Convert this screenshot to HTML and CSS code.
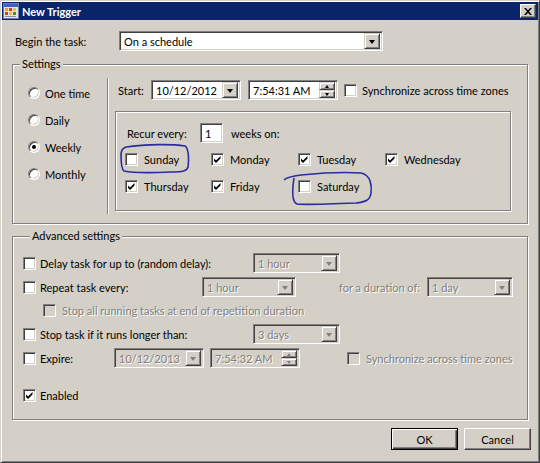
FILE: index.html
```html
<!DOCTYPE html>
<html>
<head>
<meta charset="utf-8">
<link rel="stylesheet" href="styles.css">
</head>
<body>
<div class="window">
  <div class="titlebar">
    <svg class="appicon" width="16" height="16" viewBox="0 0 16 16">
      <rect x="0.5" y="0.5" width="15" height="15" fill="#e8e4dc" stroke="#6b7fa8"/>
      <rect x="1" y="1" width="14" height="3" fill="#3a62b8"/>
      <rect x="2" y="5" width="3" height="3" fill="#e8a020"/>
      <rect x="6" y="5" width="3" height="3" fill="#d83a20"/>
      <rect x="10" y="5" width="3" height="3" fill="#f0c030"/>
      <rect x="2" y="9" width="3" height="3" fill="#d83a20"/>
      <rect x="6" y="9" width="3" height="3" fill="#f0c030"/>
      <rect x="10" y="9" width="3" height="3" fill="#4a8a30"/>
      <rect x="2" y="13" width="11" height="1" fill="#8890a8"/>
    </svg>
    <span class="title">New Trigger</span>
    <span class="close"><svg width="8" height="7" viewBox="0 0 8 7"><path d="M0 0h2l2 2.2 2-2.2h2l-3 3.5 3 3.5h-2l-2-2.2-2 2.2h-2l3-3.5z" fill="#000"/></svg></span>
  </div>

  <div class="client">
    <div class="begin-row">
      <span class="begin-label">Begin the task:</span>
      <div class="field combo w264"><span class="ftext">On a schedule</span><span class="dd"><i class="tri"></i></span></div>
    </div>

    <fieldset class="group settings">
      <legend>Settings</legend>
      <div class="settings-body">
        <div class="radios">
          <div class="radio-row"><span class="radio"></span><span>One time</span></div>
          <div class="radio-row"><span class="radio"></span><span>Daily</span></div>
          <div class="radio-row"><span class="radio on"></span><span>Weekly</span></div>
          <div class="radio-row"><span class="radio"></span><span>Monthly</span></div>
        </div>
        <div class="vsep"></div>
        <div class="sched">
          <div class="start-row">
            <span class="start-label">Start:</span>
            <div class="field combo w90"><span class="ftext">10/12/2012</span><span class="dd"><i class="tri"></i></span></div>
            <div class="field spinbox w90 ml7"><span class="ftext">7:54:31 AM</span><span class="spin"><span class="sb"><i class="up"></i></span><span class="sb"><i class="down"></i></span></span></div>
            <span class="cb ml6"></span><span class="ml5">Synchronize across time zones</span>
          </div>
          <div class="recur-box">
            <div class="recur-row">
              <span class="recur-label">Recur every:</span>
              <div class="field w23"><span class="ftext">1</span></div>
              <span class="weeks">weeks on:</span>
            </div>
            <div class="days">
              <div class="day"><span class="cb"></span><span>Sunday</span></div>
              <div class="day"><span class="cb on"><svg viewBox="0 0 11 11"><path d="M2 4.5L4 6.5L8.5 2V4.5L4 9L2 7Z"/></svg></span><span>Monday</span></div>
              <div class="day"><span class="cb on"><svg viewBox="0 0 11 11"><path d="M2 4.5L4 6.5L8.5 2V4.5L4 9L2 7Z"/></svg></span><span>Tuesday</span></div>
              <div class="day"><span class="cb on"><svg viewBox="0 0 11 11"><path d="M2 4.5L4 6.5L8.5 2V4.5L4 9L2 7Z"/></svg></span><span>Wednesday</span></div>
              <div class="day"><span class="cb on"><svg viewBox="0 0 11 11"><path d="M2 4.5L4 6.5L8.5 2V4.5L4 9L2 7Z"/></svg></span><span>Thursday</span></div>
              <div class="day"><span class="cb on"><svg viewBox="0 0 11 11"><path d="M2 4.5L4 6.5L8.5 2V4.5L4 9L2 7Z"/></svg></span><span>Friday</span></div>
              <div class="day sat"><span class="cb"></span><span>Saturday</span></div>
            </div>
          </div>
        </div>
      </div>
    </fieldset>

    <fieldset class="group advanced">
      <legend>Advanced settings</legend>
      <div class="adv-row">
        <span class="cb"></span><span class="alabel w213">Delay task for up to (random delay):</span>
        <div class="field combo dis w87"><span class="ftext">1 hour</span><span class="dd"><i class="tri"></i></span></div>
      </div>
      <div class="adv-row">
        <span class="cb"></span><span class="alabel w162">Repeat task every:</span>
        <div class="field combo dis w94"><span class="ftext">1 hour</span><span class="dd"><i class="tri"></i></span></div>
        <span class="distext dur">for a duration of:</span>
        <div class="field combo dis w86"><span class="ftext">1 day</span><span class="dd"><i class="tri"></i></span></div>
      </div>
      <div class="adv-row sub">
        <span class="cb dis"></span><span class="distext ml6">Stop all running tasks at end of repetition duration</span>
      </div>
      <div class="adv-row">
        <span class="cb"></span><span class="alabel w213">Stop task if it runs longer than:</span>
        <div class="field combo dis w87"><span class="ftext">3 days</span><span class="dd"><i class="tri"></i></span></div>
      </div>
      <div class="adv-row">
        <span class="cb"></span><span class="alabel w74">Expire:</span>
        <div class="field combo dis w90"><span class="ftext">10/12/2013</span><span class="dd"><i class="tri"></i></span></div>
        <div class="field spinbox dis w90 ml6"><span class="ftext">7:54:32 AM</span><span class="spin"><span class="sb"><i class="up"></i></span><span class="sb"><i class="down"></i></span></span></div>
        <span class="cb dis ml47"></span><span class="distext ml6">Synchronize across time zones</span>
      </div>
      <div class="adv-row enabled">
        <span class="cb on"><svg viewBox="0 0 11 11"><path d="M2 4.5L4 6.5L8.5 2V4.5L4 9L2 7Z"/></svg></span><span class="alabel">Enabled</span>
      </div>
    </fieldset>

    <div class="buttons">
      <span class="btn default">OK</span>
      <span class="btn">Cancel</span>
    </div>
  </div>

  <svg class="annot" width="540" height="463" viewBox="0 0 540 463">
    <path d="M125 146 C 145 143, 172 143, 184 145 C 188 147, 188 160, 187 166 C 186 170, 182 171, 170 171 C 150 172, 132 172, 123 170 C 120 168, 120 160, 120 154 C 120 149, 122 147, 125 146 Z" fill="none" stroke="#2b2ba0" stroke-width="1.6"/>
    <path d="M283 179 C 286 176, 292 175, 300 174 C 320 172, 345 171, 360 172 C 370 174, 371 185, 370 192 C 369 199, 365 201, 355 202 C 330 203, 305 204, 296 203 C 291 201, 291 190, 293 177" fill="none" stroke="#2b2ba0" stroke-width="1.6"/>
  </svg>
</div>
</body>
</html>
```
FILE: styles.css
```css
* { box-sizing: border-box; }
html, body { margin: 0; padding: 0; }
body {
  width: 540px; height: 463px; overflow: hidden;
  background: #d4d0c8;
  font-family: Lato, "Liberation Sans", Arial, sans-serif;
  font-size: 11px; color: #000;
}
.window {
  position: relative;
  width: 540px; height: 463px;
  background: #d4d0c8;
  border: 1px solid; border-color: #d4d0c8 #404040 #404040 #d4d0c8;
  box-shadow: inset 1px 1px #fff, inset -1px -1px #808080;
  padding: 1px;
}
.titlebar {
  height: 18px; background: #0a246a;
  display: flex; align-items: center;
  padding: 0 2px 0 1px;
}
.appicon { display: block; flex: none; }
.title { color: #fff; font-weight: bold; margin-left: 3px; flex: 1; font-size: 11px; }
.close {
  width: 16px; height: 14px; background: #d4d0c8;
  border: 1px solid; border-color: #fff #404040 #404040 #fff;
  box-shadow: inset -1px -1px #808080;
  display: flex; align-items: center; justify-content: center;
}
.close svg { display: block; }

.client { padding: 0 10px; }
.begin-row { display: flex; align-items: center; height: 20px; margin-top: 11px; }
.begin-label { width: 107px; padding-left: 3px; }

/* fields */
.field {
  height: 20px; background: #fff; display: flex; align-items: center;
  border: 1px solid; border-color: #808080 #fff #fff #808080;
  box-shadow: inset 1px 1px #404040, inset -1px -1px #d4d0c8;
  padding: 2px; flex: none;
}
.field .ftext { flex: 1; padding-left: 2px; white-space: nowrap; overflow: hidden; }
.field.dis { background: #d4d0c8; color: #808080; }
.field.dis .ftext { text-shadow: 1px 1px #fff; }
.dd {
  width: 16px; height: 16px; background: #d4d0c8; flex: none;
  border: 1px solid; border-color: #d4d0c8 #404040 #404040 #d4d0c8;
  box-shadow: inset 1px 1px #fff, inset -1px -1px #808080;
  display: flex; align-items: center; justify-content: center;
}
.tri { width: 0; height: 0; border-left: 3.5px solid transparent; border-right: 3.5px solid transparent; border-top: 4px solid #000; display: block; margin-top: 1px; }
.dis .tri { border-top-color: #808080; }
.spin { display: flex; flex-direction: column; width: 16px; height: 16px; flex: none; }
.sb {
  flex: 1; background: #d4d0c8;
  border: 1px solid; border-color: #d4d0c8 #404040 #404040 #d4d0c8;
  box-shadow: inset 1px 1px #fff, inset -1px -1px #808080;
  display: flex; align-items: center; justify-content: center;
}
.up { width: 0; height: 0; border-left: 2.5px solid transparent; border-right: 2.5px solid transparent; border-bottom: 3px solid #000; display: block; }
.down { width: 0; height: 0; border-left: 2.5px solid transparent; border-right: 2.5px solid transparent; border-top: 3px solid #000; display: block; }
.dis .up { border-bottom-color: #808080; }
.dis .down { border-top-color: #808080; }

.w264 { width: 264px; }
.w90 { width: 90px; }
.w87 { width: 87px; }
.w94 { width: 94px; }
.w86 { width: 86px; }
.w23 { width: 23px; }
.ml5 { margin-left: 5px; }
.ml6 { margin-left: 6px; }
.ml7 { margin-left: 7px; }
.ml47 { margin-left: 47px; }

/* group boxes */
.group {
  margin: 6px 0 0; padding: 7px 0 9px 0;
  border: 1px solid #808080;
  box-shadow: inset 1px 1px #fff, 1px 1px #fff;
  min-width: 0;
}
.group legend { padding: 0 2px; margin-left: 7px; line-height: 14px; background: #d4d0c8; }

.settings-body { display: flex; }
.radios { width: 94px; padding: 8px 0 0 15px; display: flex; flex-direction: column; gap: 13px; }
.radio-row { display: flex; align-items: center; height: 14px; gap: 5px; }
.radio {
  width: 12px; height: 12px; border-radius: 50%; background: #fff; flex: none;
  border: 1px solid; border-color: #808080 #fff #fff #808080;
  box-shadow: inset 1px 1px #404040, inset -1px -1px #d4d0c8;
  display: flex; align-items: center; justify-content: center;
}
.radio.on::after { content: ""; width: 4px; height: 4px; border-radius: 50%; background: #000; }
.vsep { width: 2px; height: 136px; border-left: 1px solid #808080; border-right: 1px solid #fff; flex: none; }
.sched { padding: 2px 0 0 9px; }
.start-row { display: flex; align-items: center; height: 20px; white-space: nowrap; }
.start-label { width: 33px; }

.cb {
  width: 13px; height: 13px; background: #fff; flex: none; display: block;
  border: 1px solid; border-color: #808080 #fff #fff #808080;
  box-shadow: inset 1px 1px #404040, inset -1px -1px #d4d0c8;
}
.cb svg { display: block; width: 11px; height: 11px; fill: #000; }
.cb.dis { background: #d4d0c8; }

.recur-box {
  margin: 11px 0 0 -3px; width: 396px; height: 100px;
  border: 1px solid #808080;
  box-shadow: inset 1px 1px #fff, 1px 1px #fff;
  padding: 11px 0 0 11px;
}
.recur-row { display: flex; align-items: center; height: 20px; }
.recur-label { width: 73px; }
.weeks { margin-left: 8px; }
.days {
  display: grid; grid-template-columns: 86px 87px 87px auto;
  row-gap: 13px; margin: 9px 0 0 -2px;
}
.day { display: flex; align-items: center; height: 14px; gap: 6px; }

/* advanced */
.group.advanced { margin-top: 5px; padding: 8px 0 17px 10px; }
.adv-row { display: flex; align-items: center; height: 24px; white-space: nowrap; }
.alabel { margin-left: 4px; }
.w213 { width: 213px; }
.w162 { width: 162px; }
.w74 { width: 74px; }
.distext { color: #808080; text-shadow: 1px 1px #fff; }
.dur { margin-left: 43px; width: 88px; }
.adv-row.sub { padding-left: 20px; height: 23px; }
.adv-row.enabled { height: 14px; margin-top: 18px; }

.buttons { display: flex; justify-content: flex-end; gap: 6px; margin: 8px -3px 0 0; }
.btn {
  width: 67px; height: 22px; display: flex; align-items: center; justify-content: center;
  background: #d4d0c8;
  border: 1px solid; border-color: #fff #404040 #404040 #fff;
  box-shadow: inset -1px -1px #808080;
}
.btn.default {
  border: 1px solid #000;
  box-shadow: inset 1px 1px #fff, inset -1px -1px #404040, inset -2px -2px #808080;
}

.annot { position: absolute; left: 0; top: 0; pointer-events: none; }
```
